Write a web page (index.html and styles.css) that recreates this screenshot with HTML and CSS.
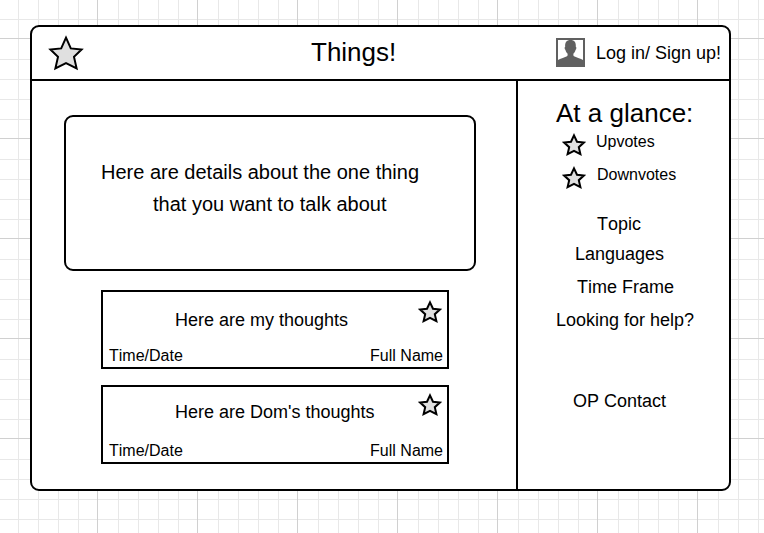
FILE: index.html
```html
<!DOCTYPE html>
<html lang="en">
<head>
<meta charset="utf-8">
<title>Things!</title>
<link rel="stylesheet" href="styles.css">
</head>
<body>
<svg class="defs" aria-hidden="true">
  <symbol id="star" viewBox="0 0 36 36">
    <path d="M18 2.7 22.8 13.4 33.6 14.5 26 21.9 28.6 33.4 18 28 7.4 33.4 10 21.9 2.4 14.5 13.2 13.4Z"/>
  </symbol>
  <symbol id="star-small" viewBox="0 0 24 24">
    <path d="M12 2.4 15 8.7 21.9 9.5 16.8 14.2 18.4 21.2 12 17.8 5.6 21.2 7.2 14.2 2.1 9.5 9 8.7Z"/>
  </symbol>
</svg>
<div class="window">
  <header class="header">
    <svg class="star star-logo"><use href="#star"/></svg>
    <h1 class="title">Things!</h1>
    <svg class="avatar" viewBox="0 0 29 29">
      <path class="avatar-frame" d="M1 1H28V28H1Z"/>
      <path class="avatar-person" d="M1 28V22.5C5 20 9 19.6 11 18.3 11.8 17.7 11.7 16.5 11.5 15.5 10.3 14.5 9.7 13.3 9.5 12 8.5 11.5 8.3 9.2 9.2 8.8 8.8 4.5 10.5 2 14.5 2S20.2 4.5 19.8 8.8C20.7 9.2 20.5 11.5 19.5 12 19.3 13.3 18.7 14.5 17.5 15.5 17.3 16.5 17.2 17.7 18 18.3 20 19.6 24 20 28 22.5V28Z"/>
    </svg>
    <span class="login">Log in/ Sign up!</span>
  </header>
  <div class="body">
    <main class="main">
      <section class="details">
        <p class="line">Here are details about the one thing</p>
        <p class="line line-second">that you want to talk about</p>
      </section>
      <article class="card">
        <div class="card-top">
          <p class="thought">Here are my thoughts</p>
          <svg class="star star-card"><use href="#star-small"/></svg>
        </div>
        <footer class="meta"><span>Time/Date</span><span>Full Name</span></footer>
      </article>
      <article class="card card-second">
        <div class="card-top">
          <p class="thought">Here are Dom's thoughts</p>
          <svg class="star star-card"><use href="#star-small"/></svg>
        </div>
        <footer class="meta"><span>Time/Date</span><span>Full Name</span></footer>
      </article>
    </main>
    <aside class="sidebar">
      <h2 class="glance">At a glance:</h2>
      <div class="vote"><svg class="star"><use href="#star-small"/></svg><span>Upvotes</span></div>
      <div class="vote vote-down"><svg class="star"><use href="#star-small"/></svg><span>Downvotes</span></div>
      <p class="item topic">Topic</p>
      <p class="item languages">Languages</p>
      <p class="item time">Time Frame</p>
      <p class="item help">Looking for help?</p>
      <p class="item contact">OP Contact</p>
    </aside>
  </div>
</div>
</body>
</html>
```
FILE: styles.css
```css
* { box-sizing: border-box; margin: 0; padding: 0; }

body {
  height: 533px;
  padding: 25px 0 0 30px;
  overflow: hidden;
  font-family: "Liberation Sans", Arial, sans-serif;
  font-kerning: none;
  color: #000;
  white-space: nowrap;
  background-color: #fff;
  background-image:
    linear-gradient(90deg, #d0d0d0 1px, transparent 1px),
    linear-gradient(#d0d0d0 1px, transparent 1px),
    linear-gradient(90deg, #e8e8e8 1px, transparent 1px 20px, #e8e8e8 20px 21px, transparent 21px 40px, #e8e8e8 40px 41px, transparent 41px 60px, #e8e8e8 60px 61px, transparent 61px),
    linear-gradient(#e8e8e8 1px, transparent 1px 20px, #e8e8e8 20px 21px, transparent 21px 40px, #e8e8e8 40px 41px, transparent 41px 60px, #e8e8e8 60px 61px, transparent 61px);
  background-size: 100px 100px;
  background-position: 97px 0, 0 38px, 18px 0, 0 59px;
}

.defs { display: none; }

.window {
  width: 701px;
  height: 466px;
  border: 2px solid #000;
  border-radius: 9px;
  background: #fff;
}

.star {
  display: block;
  width: 24px;
  height: 24px;
  flex: none;
  fill: #e0e0e0;
  stroke: #000;
  stroke-width: 2px;
}

.header {
  display: flex;
  align-items: flex-start;
  height: 54px;
  border-bottom: 2px solid #000;
}

.star-logo {
  width: 36px;
  height: 36px;
  margin: 8px 0 0 16px;
}

.title {
  width: 86px;
  margin: 10px 0 0 227px;
  font-size: 26px;
  font-weight: 400;
  line-height: 30px;
}

.avatar { width: 29px; height: 29px; margin: 11px 0 0 159px; }
.avatar-frame { fill: #fff; stroke: #606060; stroke-width: 2px; }
.avatar-person { fill: #606060; }

.login { margin: 16px 0 0 11px; font-size: 18px; line-height: 20px; }

.body { display: flex; height: 408px; }

.main { width: 484px; padding: 34px 0 0 32px; }

.details {
  width: 412px;
  height: 156px;
  padding: 39px 0 0 35px;
  border: 2px solid #000;
  border-radius: 9px;
}

.line { font-size: 20px; line-height: 32px; }
.line-second { padding-left: 52px; }

.card {
  display: flex;
  flex-direction: column;
  justify-content: space-between;
  width: 348px;
  height: 79px;
  margin: 19px 0 0 37px;
  padding: 8px 4px 2px 6px;
  border: 2px solid #000;
}

.card-second { margin-top: 16px; padding-top: 6px; }

.card-top { display: flex; justify-content: space-between; }
.thought { padding: 10px 0 0 66px; font-size: 18px; line-height: 20px; }
.card-second .thought { padding-top: 9px; }
.star-card { margin-right: 1px; }

.meta {
  display: flex;
  justify-content: space-between;
  font-size: 16px;
  line-height: 18px;
}

.sidebar {
  width: 213px;
  padding: 17px 0 0 38px;
  border-left: 2px solid #000;
}

.glance { font-size: 26px; font-weight: 400; line-height: 30px; }

.vote {
  display: flex;
  gap: 10px;
  height: 33px;
  padding-left: 6px;
  font-size: 16px;
  line-height: 18px;
}
.glance + .vote { margin-top: 5px; }
.vote-down { gap: 11px; }

.item { font-size: 18px; line-height: 20px; }
.topic { margin: 15px 0 0 41px; }
.languages { margin: 10px 0 0 19px; }
.time { margin: 13px 0 0 21px; }
.help { margin-top: 13px; }
.contact { margin: 61px 0 0 17px; }
```
